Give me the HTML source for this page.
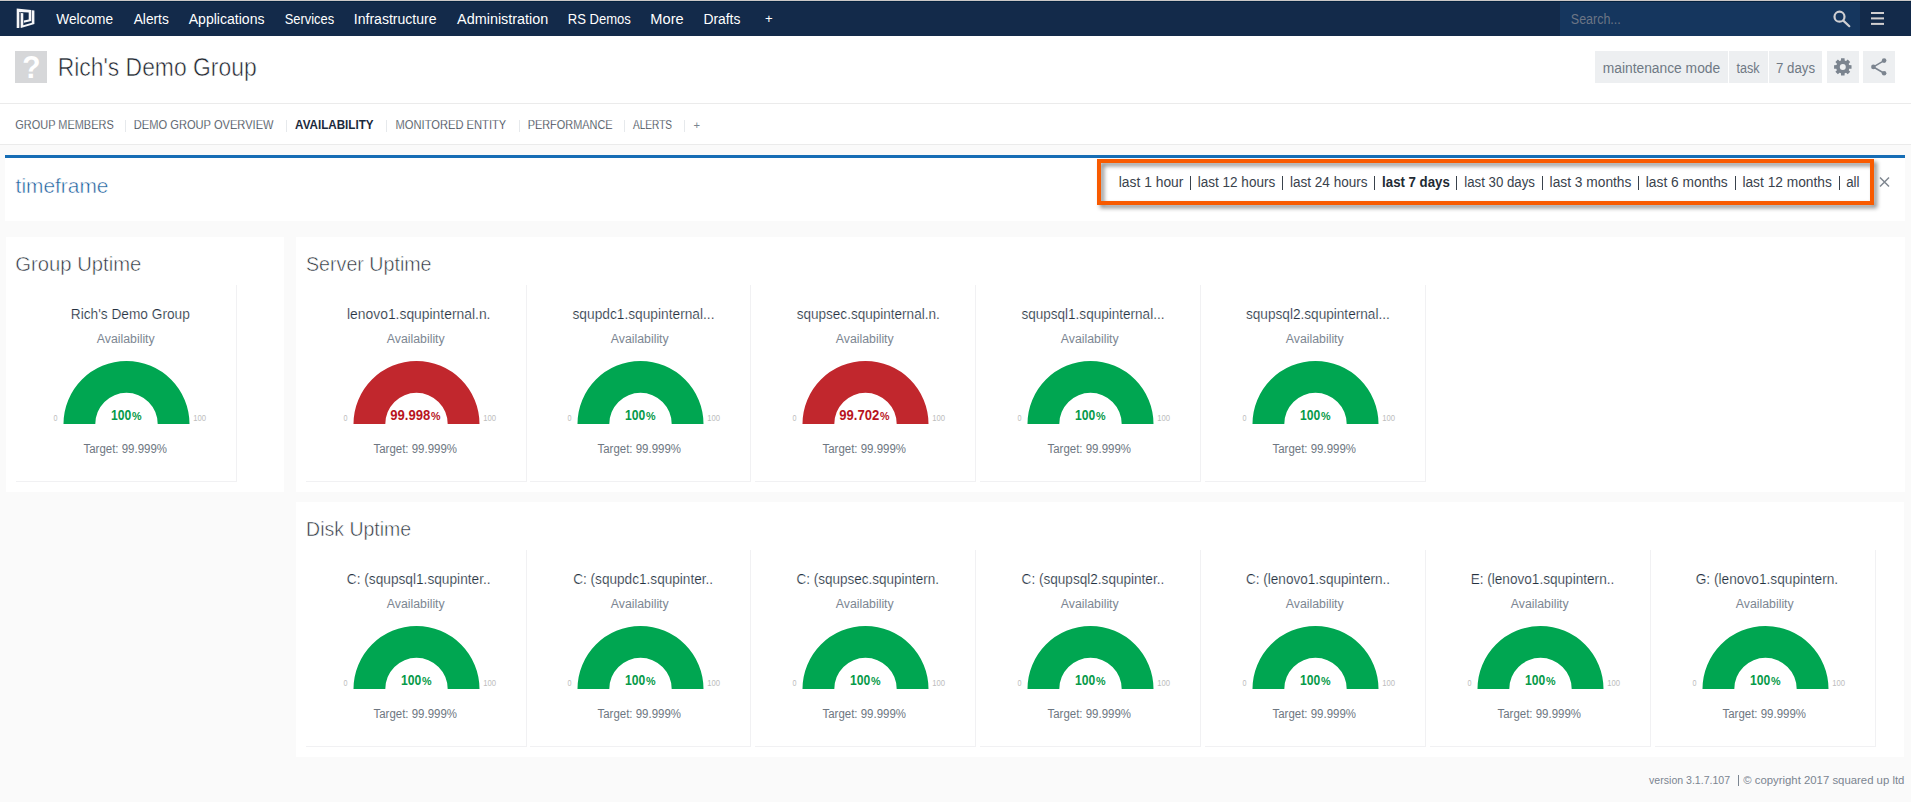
<!DOCTYPE html>
<html><head><meta charset="utf-8"><title>Squared Up</title>
<style>
html,body{margin:0;padding:0;}
body{width:1911px;height:802px;overflow:hidden;position:relative;background:#fafafa;font-family:"Liberation Sans",sans-serif;}
svg{position:absolute;left:0;top:0;}
</style></head><body>
<div style="position:absolute;left:0px;top:0px;width:1911px;height:1px;background:#cbc7c7;"></div>
<div style="position:absolute;left:0px;top:1px;width:1911px;height:35px;background:#132a4a;"></div>
<div style="position:absolute;left:0px;top:1px;width:1911px;height:1px;background:#05223f;"></div>
<div style="position:absolute;left:1560px;top:2px;width:300px;height:34px;background:#15365e;"></div>
<div style="position:absolute;left:0px;top:36px;width:1911px;height:67px;background:#ffffff;"></div>
<div style="position:absolute;left:0px;top:103px;width:1911px;height:1px;background:#ebebeb;"></div>
<div style="position:absolute;left:15px;top:51px;width:32px;height:32px;background:#d6d7d9;"></div>
<div style="position:absolute;left:1595px;top:51px;width:133px;height:32px;background:#edeff1;"></div>
<div style="position:absolute;left:1729px;top:51px;width:39px;height:32px;background:#edeff1;"></div>
<div style="position:absolute;left:1769px;top:51px;width:53px;height:32px;background:#edeff1;"></div>
<div style="position:absolute;left:1827px;top:51px;width:32px;height:32px;background:#edeff1;"></div>
<div style="position:absolute;left:1863px;top:51px;width:32px;height:32px;background:#edeff1;"></div>
<div style="position:absolute;left:0px;top:104px;width:1911px;height:40px;background:#ffffff;"></div>
<div style="position:absolute;left:0px;top:144px;width:1911px;height:1px;background:#ebebeb;"></div>
<div style="position:absolute;left:125.3px;top:120px;width:1px;height:12px;background:#e6e9ec;"></div>
<div style="position:absolute;left:285.8px;top:120px;width:1px;height:12px;background:#e6e9ec;"></div>
<div style="position:absolute;left:386.3px;top:120px;width:1px;height:12px;background:#e6e9ec;"></div>
<div style="position:absolute;left:519.4px;top:120px;width:1px;height:12px;background:#e6e9ec;"></div>
<div style="position:absolute;left:623.8px;top:120px;width:1px;height:12px;background:#e6e9ec;"></div>
<div style="position:absolute;left:684.3px;top:120px;width:1px;height:12px;background:#e6e9ec;"></div>
<div style="position:absolute;left:5px;top:155px;width:1900px;height:66px;background:#ffffff;"></div>
<div style="position:absolute;left:5px;top:155px;width:1900px;height:3px;background:#166db5;"></div>
<div style="position:absolute;left:1189.9px;top:176px;width:1.3px;height:14px;background:#39424c;"></div>
<div style="position:absolute;left:1281.9px;top:176px;width:1.3px;height:14px;background:#39424c;"></div>
<div style="position:absolute;left:1373.9px;top:176px;width:1.3px;height:14px;background:#39424c;"></div>
<div style="position:absolute;left:1456.0px;top:176px;width:1.3px;height:14px;background:#39424c;"></div>
<div style="position:absolute;left:1541.7px;top:176px;width:1.3px;height:14px;background:#39424c;"></div>
<div style="position:absolute;left:1638.2px;top:176px;width:1.3px;height:14px;background:#39424c;"></div>
<div style="position:absolute;left:1734.8000000000002px;top:176px;width:1.3px;height:14px;background:#39424c;"></div>
<div style="position:absolute;left:1839.0px;top:176px;width:1.3px;height:14px;background:#39424c;"></div>
<div style="position:absolute;left:1097px;top:159px;width:777px;height:46px;box-sizing:border-box;border:4px solid #f85a00;filter:drop-shadow(3px 3px 2px rgba(0,0,0,0.45))"></div>
<div style="position:absolute;left:6px;top:237px;width:278px;height:255px;background:#ffffff;"></div>
<div style="position:absolute;left:296px;top:237px;width:1609px;height:255px;background:#ffffff;"></div>
<div style="position:absolute;left:296px;top:502px;width:1608px;height:255px;background:#ffffff;"></div>
<div style="position:absolute;left:16px;top:285px;width:220px;height:196px;border-right:1px solid #f1f1f3;border-bottom:1px solid #f1f1f3"></div>
<div style="position:absolute;left:306px;top:285px;width:220px;height:196px;border-right:1px solid #f1f1f3;border-bottom:1px solid #f1f1f3"></div>
<div style="position:absolute;left:530px;top:285px;width:220px;height:196px;border-right:1px solid #f1f1f3;border-bottom:1px solid #f1f1f3"></div>
<div style="position:absolute;left:755px;top:285px;width:220px;height:196px;border-right:1px solid #f1f1f3;border-bottom:1px solid #f1f1f3"></div>
<div style="position:absolute;left:980px;top:285px;width:220px;height:196px;border-right:1px solid #f1f1f3;border-bottom:1px solid #f1f1f3"></div>
<div style="position:absolute;left:1205px;top:285px;width:220px;height:196px;border-right:1px solid #f1f1f3;border-bottom:1px solid #f1f1f3"></div>
<div style="position:absolute;left:306px;top:550px;width:220px;height:196px;border-right:1px solid #f1f1f3;border-bottom:1px solid #f1f1f3"></div>
<div style="position:absolute;left:530px;top:550px;width:220px;height:196px;border-right:1px solid #f1f1f3;border-bottom:1px solid #f1f1f3"></div>
<div style="position:absolute;left:755px;top:550px;width:220px;height:196px;border-right:1px solid #f1f1f3;border-bottom:1px solid #f1f1f3"></div>
<div style="position:absolute;left:980px;top:550px;width:220px;height:196px;border-right:1px solid #f1f1f3;border-bottom:1px solid #f1f1f3"></div>
<div style="position:absolute;left:1205px;top:550px;width:220px;height:196px;border-right:1px solid #f1f1f3;border-bottom:1px solid #f1f1f3"></div>
<div style="position:absolute;left:1430px;top:550px;width:220px;height:196px;border-right:1px solid #f1f1f3;border-bottom:1px solid #f1f1f3"></div>
<div style="position:absolute;left:1655px;top:550px;width:220px;height:196px;border-right:1px solid #f1f1f3;border-bottom:1px solid #f1f1f3"></div>
<div style="position:absolute;left:1737.6px;top:775px;width:1px;height:11px;background:#7b8591;"></div>
<svg width="1911" height="802" viewBox="0 0 1911 802">
<rect x="19.1" y="12.2" width="1.8" height="15.6" fill="#5d6577"/><rect x="31.2" y="10.2" width="0.8" height="12.6" fill="#5d6577"/>
<path d="M16.7 8.5 L31.2 10.0 L31.2 21.1 L23.9 22.8 L23.9 20.6 L28.7 19.6 L28.7 12.6 L19.1 12.1 L19.1 28.0 L16.7 28.0 Z" fill="#f6f6f8"/>
<path d="M20.9 13.0 L23.3 13.2 L23.3 25.3 L32.0 22.8 L32.0 10.2 L34.4 10.4 L34.4 24.0 L20.9 27.9 Z" fill="#f6f6f8"/>
<circle cx="1839.5" cy="16.7" r="5" fill="none" stroke="#cfcfd2" stroke-width="2.2"/><line x1="1843.3" y1="20.6" x2="1849.3" y2="26.2" stroke="#cfcfd2" stroke-width="2.2" stroke-linecap="round"/>
<rect x="1871" y="12" width="13" height="2" fill="#d2cfd0"/>
<rect x="1871" y="17.4" width="13" height="2" fill="#d2cfd0"/>
<rect x="1871" y="22.9" width="13" height="2" fill="#d2cfd0"/>
<path d="M1848.91 65.01 L1851.52 65.13 L1851.52 68.67 L1848.91 68.79 L1848.46 69.89 L1850.22 71.82 L1847.72 74.32 L1845.79 72.56 L1844.69 73.01 L1844.57 75.62 L1841.03 75.62 L1840.91 73.01 L1839.81 72.56 L1837.88 74.32 L1835.38 71.82 L1837.14 69.89 L1836.69 68.79 L1834.08 68.67 L1834.08 65.13 L1836.69 65.01 L1837.14 63.91 L1835.38 61.98 L1837.88 59.48 L1839.81 61.24 L1840.91 60.79 L1841.03 58.18 L1844.57 58.18 L1844.69 60.79 L1845.79 61.24 L1847.72 59.48 L1850.22 61.98 L1848.46 63.91 Z M1845.8 66.9 A3 3 0 1 0 1839.8 66.9 A3 3 0 1 0 1845.8 66.9 Z" fill="#7b848f" fill-rule="evenodd"/>
<circle cx="1842.8" cy="66.9" r="6.6" fill="#7b848f"/><circle cx="1842.8" cy="66.9" r="3" fill="#edeff1"/>
<path d="M1884.1 60.6 L1873.4 66.9 L1884.1 73.2" fill="none" stroke="#7b848f" stroke-width="1.6"/><circle cx="1884.1" cy="60.6" r="2.3" fill="#7b848f"/><circle cx="1873.4" cy="66.9" r="2.3" fill="#7b848f"/><circle cx="1884.1" cy="73.2" r="2.3" fill="#7b848f"/>
<path d="M1880 177.5 L1889 186.5 M1889 177.5 L1880 186.5" stroke="#7f8790" stroke-width="1.5"/>
<path d="M63.5 424 A63.0 63.0 0 0 1 189.5 424 L157.7 424 A31.2 31.2 0 0 0 95.3 424 Z" fill="#00a651"/>
<path d="M353.5 424 A63.0 63.0 0 0 1 479.5 424 L447.7 424 A31.2 31.2 0 0 0 385.3 424 Z" fill="#c1272d"/>
<path d="M577.5 424 A63.0 63.0 0 0 1 703.5 424 L671.7 424 A31.2 31.2 0 0 0 609.3 424 Z" fill="#00a651"/>
<path d="M802.5 424 A63.0 63.0 0 0 1 928.5 424 L896.7 424 A31.2 31.2 0 0 0 834.3 424 Z" fill="#c1272d"/>
<path d="M1027.5 424 A63.0 63.0 0 0 1 1153.5 424 L1121.7 424 A31.2 31.2 0 0 0 1059.3 424 Z" fill="#00a651"/>
<path d="M1252.5 424 A63.0 63.0 0 0 1 1378.5 424 L1346.7 424 A31.2 31.2 0 0 0 1284.3 424 Z" fill="#00a651"/>
<path d="M353.5 689 A63.0 63.0 0 0 1 479.5 689 L447.7 689 A31.2 31.2 0 0 0 385.3 689 Z" fill="#00a651"/>
<path d="M577.5 689 A63.0 63.0 0 0 1 703.5 689 L671.7 689 A31.2 31.2 0 0 0 609.3 689 Z" fill="#00a651"/>
<path d="M802.5 689 A63.0 63.0 0 0 1 928.5 689 L896.7 689 A31.2 31.2 0 0 0 834.3 689 Z" fill="#00a651"/>
<path d="M1027.5 689 A63.0 63.0 0 0 1 1153.5 689 L1121.7 689 A31.2 31.2 0 0 0 1059.3 689 Z" fill="#00a651"/>
<path d="M1252.5 689 A63.0 63.0 0 0 1 1378.5 689 L1346.7 689 A31.2 31.2 0 0 0 1284.3 689 Z" fill="#00a651"/>
<path d="M1477.5 689 A63.0 63.0 0 0 1 1603.5 689 L1571.7 689 A31.2 31.2 0 0 0 1509.3 689 Z" fill="#00a651"/>
<path d="M1702.5 689 A63.0 63.0 0 0 1 1828.5 689 L1796.7 689 A31.2 31.2 0 0 0 1734.3 689 Z" fill="#00a651"/>
</svg>
<svg width="1911" height="802" viewBox="0 0 1911 802" font-family="Liberation Sans, sans-serif">
<text x="56.30" y="24" font-size="14" fill="#ffffff" textLength="56.79" lengthAdjust="spacingAndGlyphs" xml:space="preserve">Welcome</text>
<text x="133.70" y="24" font-size="14" fill="#ffffff" textLength="35.10" lengthAdjust="spacingAndGlyphs" xml:space="preserve">Alerts</text>
<text x="188.70" y="24" font-size="14" fill="#ffffff" textLength="75.80" lengthAdjust="spacingAndGlyphs" xml:space="preserve">Applications</text>
<text x="284.70" y="24" font-size="14" fill="#ffffff" textLength="49.40" lengthAdjust="spacingAndGlyphs" xml:space="preserve">Services</text>
<text x="353.80" y="24" font-size="14" fill="#ffffff" textLength="82.79" lengthAdjust="spacingAndGlyphs" xml:space="preserve">Infrastructure</text>
<text x="457.10" y="24" font-size="14" fill="#ffffff" textLength="91.21" lengthAdjust="spacingAndGlyphs" xml:space="preserve">Administration</text>
<text x="567.77" y="24" font-size="14" fill="#ffffff" textLength="63.13" lengthAdjust="spacingAndGlyphs" xml:space="preserve">RS Demos</text>
<text x="650.36" y="24" font-size="14" fill="#ffffff" textLength="33.32" lengthAdjust="spacingAndGlyphs" xml:space="preserve">More</text>
<text x="703.41" y="24" font-size="14" fill="#ffffff" textLength="36.99" lengthAdjust="spacingAndGlyphs" xml:space="preserve">Drafts</text>
<text x="765.10" y="22.5" font-size="13" fill="#ffffff" textLength="7.70" lengthAdjust="spacingAndGlyphs" xml:space="preserve">+</text>
<text x="1570.80" y="24" font-size="14" fill="#6c7585" textLength="49.99" lengthAdjust="spacingAndGlyphs" xml:space="preserve">Search...</text>
<text x="22.36" y="78" font-size="32" font-weight="bold" fill="#ffffff" textLength="18.28" lengthAdjust="spacingAndGlyphs" xml:space="preserve">?</text>
<text x="57.67" y="76" font-size="25" fill="#1e252e" stroke="#ffffff" stroke-width="0.55" textLength="198.96" lengthAdjust="spacingAndGlyphs" xml:space="preserve">Rich's Demo Group</text>
<text x="1602.70" y="73" font-size="14" fill="#6f7984" textLength="117.49" lengthAdjust="spacingAndGlyphs" xml:space="preserve">maintenance mode</text>
<text x="1736.50" y="73" font-size="14" fill="#6f7984" textLength="23.10" lengthAdjust="spacingAndGlyphs" xml:space="preserve">task</text>
<text x="1776.00" y="73" font-size="14" fill="#6f7984" textLength="39.00" lengthAdjust="spacingAndGlyphs" xml:space="preserve">7 days</text>
<text x="15.30" y="129" font-size="12.5" fill="#222d3a" stroke="#ffffff" stroke-width="0.25" textLength="98.40" lengthAdjust="spacingAndGlyphs" xml:space="preserve">GROUP MEMBERS</text>
<text x="133.81" y="129" font-size="12.5" fill="#222d3a" stroke="#ffffff" stroke-width="0.25" textLength="139.81" lengthAdjust="spacingAndGlyphs" xml:space="preserve">DEMO GROUP OVERVIEW</text>
<text x="295.10" y="129" font-size="12.5" font-weight="bold" fill="#1b2a3c" textLength="78.48" lengthAdjust="spacingAndGlyphs" xml:space="preserve">AVAILABILITY</text>
<text x="395.51" y="129" font-size="12.5" fill="#222d3a" stroke="#ffffff" stroke-width="0.25" textLength="110.80" lengthAdjust="spacingAndGlyphs" xml:space="preserve">MONITORED ENTITY</text>
<text x="527.63" y="129" font-size="12.5" fill="#222d3a" stroke="#ffffff" stroke-width="0.25" textLength="84.97" lengthAdjust="spacingAndGlyphs" xml:space="preserve">PERFORMANCE</text>
<text x="633.00" y="129" font-size="12.5" fill="#222d3a" stroke="#ffffff" stroke-width="0.25" textLength="39.07" lengthAdjust="spacingAndGlyphs" xml:space="preserve">ALERTS</text>
<text x="693.40" y="129" font-size="11" fill="#7a8490" textLength="6.53" lengthAdjust="spacingAndGlyphs" xml:space="preserve">+</text>
<text x="15.60" y="193" font-size="21" fill="#1c5e9c" stroke="#ffffff" stroke-width="0.5" textLength="92.88" lengthAdjust="spacingAndGlyphs" xml:space="preserve">timeframe</text>
<text x="1118.80" y="187" font-size="14" fill="#39424c" textLength="64.57" lengthAdjust="spacingAndGlyphs" xml:space="preserve">last 1 hour</text>
<text x="1197.80" y="187" font-size="14" fill="#39424c" textLength="77.40" lengthAdjust="spacingAndGlyphs" xml:space="preserve">last 12 hours</text>
<text x="1290.00" y="187" font-size="14" fill="#39424c" textLength="77.50" lengthAdjust="spacingAndGlyphs" xml:space="preserve">last 24 hours</text>
<text x="1382.10" y="187" font-size="14" font-weight="bold" fill="#222a33" textLength="67.70" lengthAdjust="spacingAndGlyphs" xml:space="preserve">last 7 days</text>
<text x="1464.30" y="187" font-size="14" fill="#39424c" textLength="70.70" lengthAdjust="spacingAndGlyphs" xml:space="preserve">last 30 days</text>
<text x="1549.60" y="187" font-size="14" fill="#39424c" textLength="81.80" lengthAdjust="spacingAndGlyphs" xml:space="preserve">last 3 months</text>
<text x="1645.80" y="187" font-size="14" fill="#39424c" textLength="81.90" lengthAdjust="spacingAndGlyphs" xml:space="preserve">last 6 months</text>
<text x="1742.40" y="187" font-size="14" fill="#39424c" textLength="89.50" lengthAdjust="spacingAndGlyphs" xml:space="preserve">last 12 months</text>
<text x="1846.20" y="187" font-size="14" fill="#39424c" textLength="13.30" lengthAdjust="spacingAndGlyphs" xml:space="preserve">all</text>
<text x="15.34" y="271" font-size="21" fill="#2a313a" stroke="#ffffff" stroke-width="0.55" textLength="126.02" lengthAdjust="spacingAndGlyphs" xml:space="preserve">Group Uptime</text>
<text x="306.00" y="271" font-size="21" fill="#2a313a" stroke="#ffffff" stroke-width="0.55" textLength="125.54" lengthAdjust="spacingAndGlyphs" xml:space="preserve">Server Uptime</text>
<text x="306.07" y="536" font-size="21" fill="#2a313a" stroke="#ffffff" stroke-width="0.55" textLength="105.06" lengthAdjust="spacingAndGlyphs" xml:space="preserve">Disk Uptime</text>
<text x="70.82" y="319" font-size="14" fill="#243140" stroke="#ffffff" stroke-width="0.2" textLength="118.97" lengthAdjust="spacingAndGlyphs" xml:space="preserve">Rich's Demo Group</text>
<text x="96.80" y="343" font-size="12" fill="#7c8692" textLength="57.90" lengthAdjust="spacingAndGlyphs" xml:space="preserve">Availability</text>
<text x="83.50" y="452.6" font-size="12" fill="#6e7782" textLength="83.48" lengthAdjust="spacingAndGlyphs" xml:space="preserve">Target: 99.999%</text>
<text x="53.60" y="421" font-size="9" fill="#bdbdbd" textLength="4.00" lengthAdjust="spacingAndGlyphs" xml:space="preserve">0</text>
<text x="193.20" y="421" font-size="9" fill="#bdbdbd" textLength="12.80" lengthAdjust="spacingAndGlyphs" xml:space="preserve">100</text>
<text x="111.10" y="420" font-size="14" font-weight="bold" fill="#069a49" textLength="20.21" lengthAdjust="spacingAndGlyphs" xml:space="preserve">100</text>
<text x="132.00" y="420" font-size="11" font-weight="bold" fill="#069a49" textLength="9.59" lengthAdjust="spacingAndGlyphs" xml:space="preserve">%</text>
<text x="347.00" y="319" font-size="14" fill="#243140" stroke="#ffffff" stroke-width="0.2" textLength="143.48" lengthAdjust="spacingAndGlyphs" xml:space="preserve">lenovo1.squpinternal.n.</text>
<text x="386.80" y="343" font-size="12" fill="#7c8692" textLength="57.90" lengthAdjust="spacingAndGlyphs" xml:space="preserve">Availability</text>
<text x="373.50" y="452.6" font-size="12" fill="#6e7782" textLength="83.48" lengthAdjust="spacingAndGlyphs" xml:space="preserve">Target: 99.999%</text>
<text x="343.60" y="421" font-size="9" fill="#bdbdbd" textLength="4.00" lengthAdjust="spacingAndGlyphs" xml:space="preserve">0</text>
<text x="483.20" y="421" font-size="9" fill="#bdbdbd" textLength="12.80" lengthAdjust="spacingAndGlyphs" xml:space="preserve">100</text>
<text x="390.30" y="420" font-size="14" font-weight="bold" fill="#b8141d" textLength="40.00" lengthAdjust="spacingAndGlyphs" xml:space="preserve">99.998</text>
<text x="431.00" y="420" font-size="11" font-weight="bold" fill="#b8141d" textLength="9.49" lengthAdjust="spacingAndGlyphs" xml:space="preserve">%</text>
<text x="572.50" y="319" font-size="14" fill="#243140" stroke="#ffffff" stroke-width="0.2" textLength="141.97" lengthAdjust="spacingAndGlyphs" xml:space="preserve">squpdc1.squpinternal...</text>
<text x="610.80" y="343" font-size="12" fill="#7c8692" textLength="57.90" lengthAdjust="spacingAndGlyphs" xml:space="preserve">Availability</text>
<text x="597.50" y="452.6" font-size="12" fill="#6e7782" textLength="83.48" lengthAdjust="spacingAndGlyphs" xml:space="preserve">Target: 99.999%</text>
<text x="567.60" y="421" font-size="9" fill="#bdbdbd" textLength="4.00" lengthAdjust="spacingAndGlyphs" xml:space="preserve">0</text>
<text x="707.20" y="421" font-size="9" fill="#bdbdbd" textLength="12.80" lengthAdjust="spacingAndGlyphs" xml:space="preserve">100</text>
<text x="625.10" y="420" font-size="14" font-weight="bold" fill="#069a49" textLength="20.21" lengthAdjust="spacingAndGlyphs" xml:space="preserve">100</text>
<text x="646.00" y="420" font-size="11" font-weight="bold" fill="#069a49" textLength="9.59" lengthAdjust="spacingAndGlyphs" xml:space="preserve">%</text>
<text x="796.70" y="319" font-size="14" fill="#243140" stroke="#ffffff" stroke-width="0.2" textLength="143.06" lengthAdjust="spacingAndGlyphs" xml:space="preserve">squpsec.squpinternal.n.</text>
<text x="835.80" y="343" font-size="12" fill="#7c8692" textLength="57.90" lengthAdjust="spacingAndGlyphs" xml:space="preserve">Availability</text>
<text x="822.50" y="452.6" font-size="12" fill="#6e7782" textLength="83.48" lengthAdjust="spacingAndGlyphs" xml:space="preserve">Target: 99.999%</text>
<text x="792.60" y="421" font-size="9" fill="#bdbdbd" textLength="4.00" lengthAdjust="spacingAndGlyphs" xml:space="preserve">0</text>
<text x="932.20" y="421" font-size="9" fill="#bdbdbd" textLength="12.80" lengthAdjust="spacingAndGlyphs" xml:space="preserve">100</text>
<text x="839.30" y="420" font-size="14" font-weight="bold" fill="#b8141d" textLength="40.00" lengthAdjust="spacingAndGlyphs" xml:space="preserve">99.702</text>
<text x="880.00" y="420" font-size="11" font-weight="bold" fill="#b8141d" textLength="9.49" lengthAdjust="spacingAndGlyphs" xml:space="preserve">%</text>
<text x="1021.40" y="319" font-size="14" fill="#243140" stroke="#ffffff" stroke-width="0.2" textLength="143.06" lengthAdjust="spacingAndGlyphs" xml:space="preserve">squpsql1.squpinternal...</text>
<text x="1060.80" y="343" font-size="12" fill="#7c8692" textLength="57.90" lengthAdjust="spacingAndGlyphs" xml:space="preserve">Availability</text>
<text x="1047.50" y="452.6" font-size="12" fill="#6e7782" textLength="83.48" lengthAdjust="spacingAndGlyphs" xml:space="preserve">Target: 99.999%</text>
<text x="1017.60" y="421" font-size="9" fill="#bdbdbd" textLength="4.00" lengthAdjust="spacingAndGlyphs" xml:space="preserve">0</text>
<text x="1157.20" y="421" font-size="9" fill="#bdbdbd" textLength="12.80" lengthAdjust="spacingAndGlyphs" xml:space="preserve">100</text>
<text x="1075.10" y="420" font-size="14" font-weight="bold" fill="#069a49" textLength="20.21" lengthAdjust="spacingAndGlyphs" xml:space="preserve">100</text>
<text x="1096.00" y="420" font-size="11" font-weight="bold" fill="#069a49" textLength="9.59" lengthAdjust="spacingAndGlyphs" xml:space="preserve">%</text>
<text x="1246.00" y="319" font-size="14" fill="#243140" stroke="#ffffff" stroke-width="0.2" textLength="143.76" lengthAdjust="spacingAndGlyphs" xml:space="preserve">squpsql2.squpinternal...</text>
<text x="1285.80" y="343" font-size="12" fill="#7c8692" textLength="57.90" lengthAdjust="spacingAndGlyphs" xml:space="preserve">Availability</text>
<text x="1272.50" y="452.6" font-size="12" fill="#6e7782" textLength="83.48" lengthAdjust="spacingAndGlyphs" xml:space="preserve">Target: 99.999%</text>
<text x="1242.60" y="421" font-size="9" fill="#bdbdbd" textLength="4.00" lengthAdjust="spacingAndGlyphs" xml:space="preserve">0</text>
<text x="1382.20" y="421" font-size="9" fill="#bdbdbd" textLength="12.80" lengthAdjust="spacingAndGlyphs" xml:space="preserve">100</text>
<text x="1300.10" y="420" font-size="14" font-weight="bold" fill="#069a49" textLength="20.21" lengthAdjust="spacingAndGlyphs" xml:space="preserve">100</text>
<text x="1321.00" y="420" font-size="11" font-weight="bold" fill="#069a49" textLength="9.59" lengthAdjust="spacingAndGlyphs" xml:space="preserve">%</text>
<text x="346.80" y="584" font-size="14" fill="#243140" stroke="#ffffff" stroke-width="0.2" textLength="143.77" lengthAdjust="spacingAndGlyphs" xml:space="preserve">C: (squpsql1.squpinter..</text>
<text x="386.80" y="608" font-size="12" fill="#7c8692" textLength="57.90" lengthAdjust="spacingAndGlyphs" xml:space="preserve">Availability</text>
<text x="373.50" y="717.6" font-size="12" fill="#6e7782" textLength="83.48" lengthAdjust="spacingAndGlyphs" xml:space="preserve">Target: 99.999%</text>
<text x="343.60" y="686" font-size="9" fill="#bdbdbd" textLength="4.00" lengthAdjust="spacingAndGlyphs" xml:space="preserve">0</text>
<text x="483.20" y="686" font-size="9" fill="#bdbdbd" textLength="12.80" lengthAdjust="spacingAndGlyphs" xml:space="preserve">100</text>
<text x="401.10" y="685" font-size="14" font-weight="bold" fill="#069a49" textLength="20.21" lengthAdjust="spacingAndGlyphs" xml:space="preserve">100</text>
<text x="422.00" y="685" font-size="11" font-weight="bold" fill="#069a49" textLength="9.59" lengthAdjust="spacingAndGlyphs" xml:space="preserve">%</text>
<text x="573.20" y="584" font-size="14" fill="#243140" stroke="#ffffff" stroke-width="0.2" textLength="139.96" lengthAdjust="spacingAndGlyphs" xml:space="preserve">C: (squpdc1.squpinter..</text>
<text x="610.80" y="608" font-size="12" fill="#7c8692" textLength="57.90" lengthAdjust="spacingAndGlyphs" xml:space="preserve">Availability</text>
<text x="597.50" y="717.6" font-size="12" fill="#6e7782" textLength="83.48" lengthAdjust="spacingAndGlyphs" xml:space="preserve">Target: 99.999%</text>
<text x="567.60" y="686" font-size="9" fill="#bdbdbd" textLength="4.00" lengthAdjust="spacingAndGlyphs" xml:space="preserve">0</text>
<text x="707.20" y="686" font-size="9" fill="#bdbdbd" textLength="12.80" lengthAdjust="spacingAndGlyphs" xml:space="preserve">100</text>
<text x="625.10" y="685" font-size="14" font-weight="bold" fill="#069a49" textLength="20.21" lengthAdjust="spacingAndGlyphs" xml:space="preserve">100</text>
<text x="646.00" y="685" font-size="11" font-weight="bold" fill="#069a49" textLength="9.59" lengthAdjust="spacingAndGlyphs" xml:space="preserve">%</text>
<text x="796.40" y="584" font-size="14" fill="#243140" stroke="#ffffff" stroke-width="0.2" textLength="142.56" lengthAdjust="spacingAndGlyphs" xml:space="preserve">C: (squpsec.squpintern.</text>
<text x="835.80" y="608" font-size="12" fill="#7c8692" textLength="57.90" lengthAdjust="spacingAndGlyphs" xml:space="preserve">Availability</text>
<text x="822.50" y="717.6" font-size="12" fill="#6e7782" textLength="83.48" lengthAdjust="spacingAndGlyphs" xml:space="preserve">Target: 99.999%</text>
<text x="792.60" y="686" font-size="9" fill="#bdbdbd" textLength="4.00" lengthAdjust="spacingAndGlyphs" xml:space="preserve">0</text>
<text x="932.20" y="686" font-size="9" fill="#bdbdbd" textLength="12.80" lengthAdjust="spacingAndGlyphs" xml:space="preserve">100</text>
<text x="850.10" y="685" font-size="14" font-weight="bold" fill="#069a49" textLength="20.21" lengthAdjust="spacingAndGlyphs" xml:space="preserve">100</text>
<text x="871.00" y="685" font-size="11" font-weight="bold" fill="#069a49" textLength="9.59" lengthAdjust="spacingAndGlyphs" xml:space="preserve">%</text>
<text x="1021.60" y="584" font-size="14" fill="#243140" stroke="#ffffff" stroke-width="0.2" textLength="142.66" lengthAdjust="spacingAndGlyphs" xml:space="preserve">C: (squpsql2.squpinter..</text>
<text x="1060.80" y="608" font-size="12" fill="#7c8692" textLength="57.90" lengthAdjust="spacingAndGlyphs" xml:space="preserve">Availability</text>
<text x="1047.50" y="717.6" font-size="12" fill="#6e7782" textLength="83.48" lengthAdjust="spacingAndGlyphs" xml:space="preserve">Target: 99.999%</text>
<text x="1017.60" y="686" font-size="9" fill="#bdbdbd" textLength="4.00" lengthAdjust="spacingAndGlyphs" xml:space="preserve">0</text>
<text x="1157.20" y="686" font-size="9" fill="#bdbdbd" textLength="12.80" lengthAdjust="spacingAndGlyphs" xml:space="preserve">100</text>
<text x="1075.10" y="685" font-size="14" font-weight="bold" fill="#069a49" textLength="20.21" lengthAdjust="spacingAndGlyphs" xml:space="preserve">100</text>
<text x="1096.00" y="685" font-size="11" font-weight="bold" fill="#069a49" textLength="9.59" lengthAdjust="spacingAndGlyphs" xml:space="preserve">%</text>
<text x="1245.90" y="584" font-size="14" fill="#243140" stroke="#ffffff" stroke-width="0.2" textLength="144.16" lengthAdjust="spacingAndGlyphs" xml:space="preserve">C: (lenovo1.squpintern..</text>
<text x="1285.80" y="608" font-size="12" fill="#7c8692" textLength="57.90" lengthAdjust="spacingAndGlyphs" xml:space="preserve">Availability</text>
<text x="1272.50" y="717.6" font-size="12" fill="#6e7782" textLength="83.48" lengthAdjust="spacingAndGlyphs" xml:space="preserve">Target: 99.999%</text>
<text x="1242.60" y="686" font-size="9" fill="#bdbdbd" textLength="4.00" lengthAdjust="spacingAndGlyphs" xml:space="preserve">0</text>
<text x="1382.20" y="686" font-size="9" fill="#bdbdbd" textLength="12.80" lengthAdjust="spacingAndGlyphs" xml:space="preserve">100</text>
<text x="1300.10" y="685" font-size="14" font-weight="bold" fill="#069a49" textLength="20.21" lengthAdjust="spacingAndGlyphs" xml:space="preserve">100</text>
<text x="1321.00" y="685" font-size="11" font-weight="bold" fill="#069a49" textLength="9.59" lengthAdjust="spacingAndGlyphs" xml:space="preserve">%</text>
<text x="1470.63" y="584" font-size="14" fill="#243140" stroke="#ffffff" stroke-width="0.2" textLength="143.64" lengthAdjust="spacingAndGlyphs" xml:space="preserve">E: (lenovo1.squpintern..</text>
<text x="1510.80" y="608" font-size="12" fill="#7c8692" textLength="57.90" lengthAdjust="spacingAndGlyphs" xml:space="preserve">Availability</text>
<text x="1497.50" y="717.6" font-size="12" fill="#6e7782" textLength="83.48" lengthAdjust="spacingAndGlyphs" xml:space="preserve">Target: 99.999%</text>
<text x="1467.60" y="686" font-size="9" fill="#bdbdbd" textLength="4.00" lengthAdjust="spacingAndGlyphs" xml:space="preserve">0</text>
<text x="1607.20" y="686" font-size="9" fill="#bdbdbd" textLength="12.80" lengthAdjust="spacingAndGlyphs" xml:space="preserve">100</text>
<text x="1525.10" y="685" font-size="14" font-weight="bold" fill="#069a49" textLength="20.21" lengthAdjust="spacingAndGlyphs" xml:space="preserve">100</text>
<text x="1546.00" y="685" font-size="11" font-weight="bold" fill="#069a49" textLength="9.59" lengthAdjust="spacingAndGlyphs" xml:space="preserve">%</text>
<text x="1695.70" y="584" font-size="14" fill="#243140" stroke="#ffffff" stroke-width="0.2" textLength="142.47" lengthAdjust="spacingAndGlyphs" xml:space="preserve">G: (lenovo1.squpintern.</text>
<text x="1735.80" y="608" font-size="12" fill="#7c8692" textLength="57.90" lengthAdjust="spacingAndGlyphs" xml:space="preserve">Availability</text>
<text x="1722.50" y="717.6" font-size="12" fill="#6e7782" textLength="83.48" lengthAdjust="spacingAndGlyphs" xml:space="preserve">Target: 99.999%</text>
<text x="1692.60" y="686" font-size="9" fill="#bdbdbd" textLength="4.00" lengthAdjust="spacingAndGlyphs" xml:space="preserve">0</text>
<text x="1832.20" y="686" font-size="9" fill="#bdbdbd" textLength="12.80" lengthAdjust="spacingAndGlyphs" xml:space="preserve">100</text>
<text x="1750.10" y="685" font-size="14" font-weight="bold" fill="#069a49" textLength="20.21" lengthAdjust="spacingAndGlyphs" xml:space="preserve">100</text>
<text x="1771.00" y="685" font-size="11" font-weight="bold" fill="#069a49" textLength="9.59" lengthAdjust="spacingAndGlyphs" xml:space="preserve">%</text>
<text x="1649.10" y="784" font-size="11" fill="#7b8591" textLength="81.01" lengthAdjust="spacingAndGlyphs" xml:space="preserve">version 3.1.7.107</text>
<text x="1743.20" y="784" font-size="11" fill="#7b8591" textLength="161.22" lengthAdjust="spacingAndGlyphs" xml:space="preserve">© copyright 2017 squared up ltd</text>
</svg>
</body></html>
